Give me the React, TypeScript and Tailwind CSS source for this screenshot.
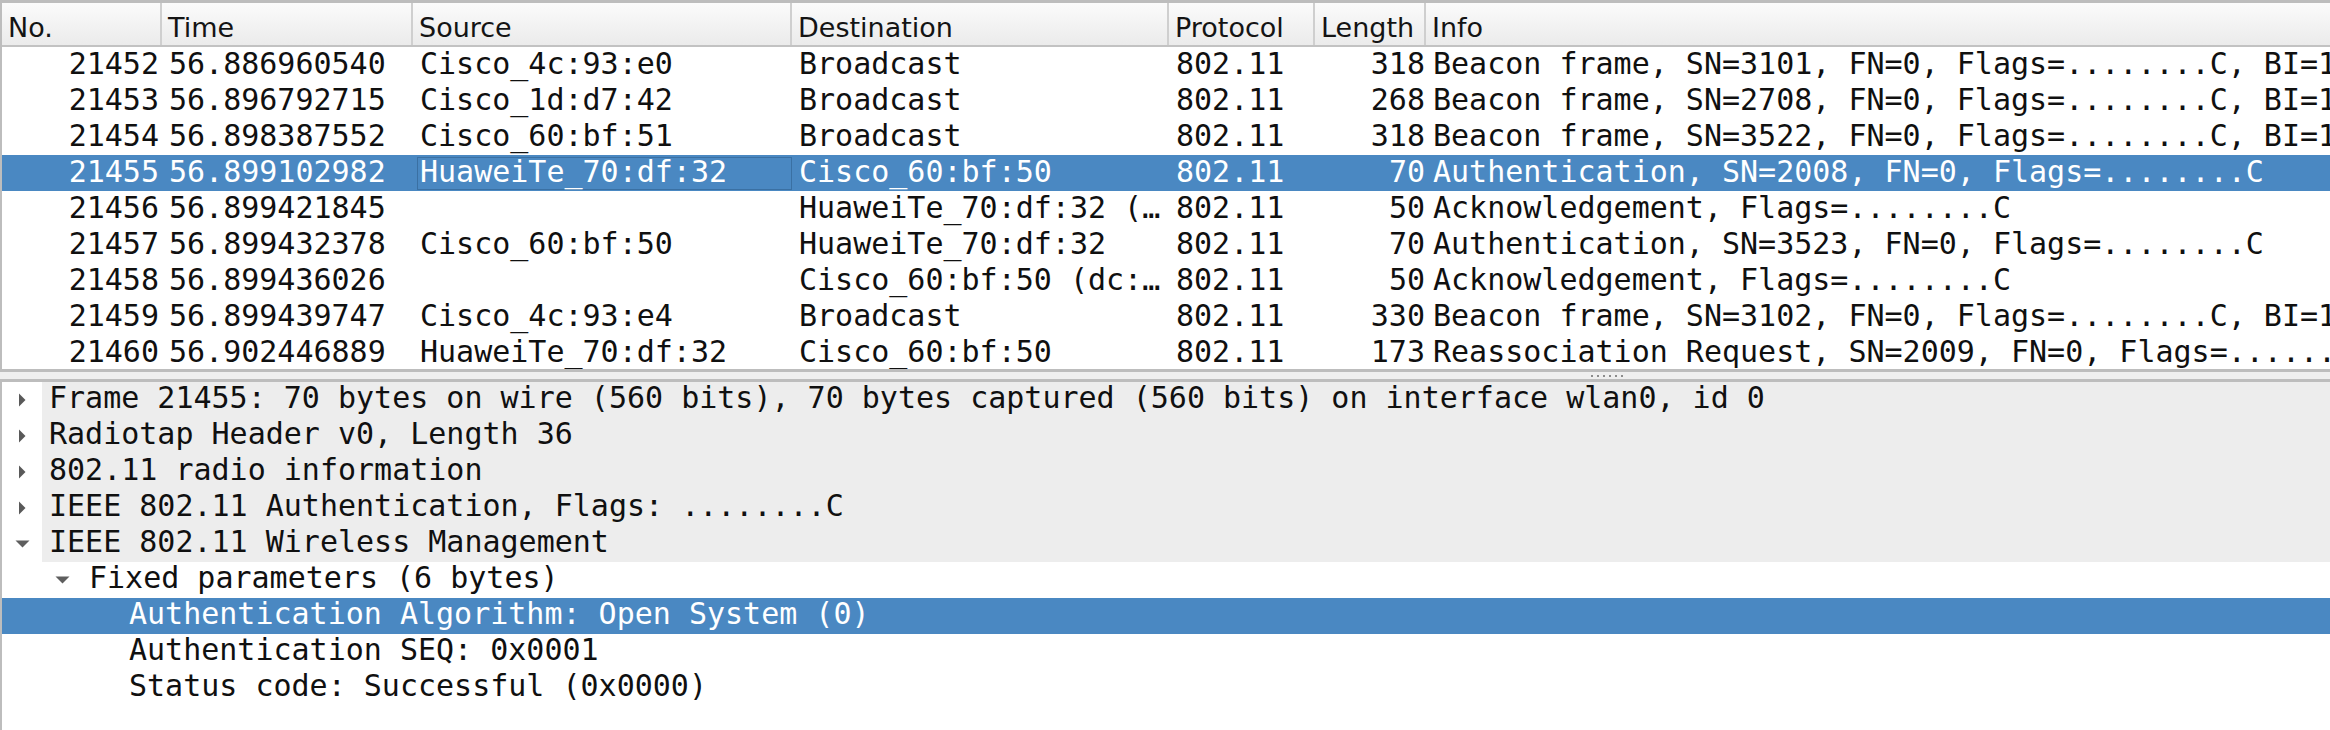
import React from "react";

type Pkt = [string, string, string, string, string, string, string];

const packets: Pkt[] = [
  ["21452", "56.886960540", "Cisco_4c:93:e0", "Broadcast", "802.11", "318", "Beacon frame, SN=3101, FN=0, Flags=........C, BI=102, SSID=eduroam"],
  ["21453", "56.896792715", "Cisco_1d:d7:42", "Broadcast", "802.11", "268", "Beacon frame, SN=2708, FN=0, Flags=........C, BI=102, SSID=eduroam"],
  ["21454", "56.898387552", "Cisco_60:bf:51", "Broadcast", "802.11", "318", "Beacon frame, SN=3522, FN=0, Flags=........C, BI=102, SSID=eduroam"],
  ["21455", "56.899102982", "HuaweiTe_70:df:32", "Cisco_60:bf:50", "802.11", "70", "Authentication, SN=2008, FN=0, Flags=........C"],
  ["21456", "56.899421845", "", "HuaweiTe_70:df:32 (48:db:50:70:df:32) (RA)", "802.11", "50", "Acknowledgement, Flags=........C"],
  ["21457", "56.899432378", "Cisco_60:bf:50", "HuaweiTe_70:df:32", "802.11", "70", "Authentication, SN=3523, FN=0, Flags=........C"],
  ["21458", "56.899436026", "", "Cisco_60:bf:50 (dc:eb:94:60:bf:50) (RA)", "802.11", "50", "Acknowledgement, Flags=........C"],
  ["21459", "56.899439747", "Cisco_4c:93:e4", "Broadcast", "802.11", "330", "Beacon frame, SN=3102, FN=0, Flags=........C, BI=102, SSID=eduroam"],
  ["21460", "56.902446889", "HuaweiTe_70:df:32", "Cisco_60:bf:50", "802.11", "173", "Reassociation Request, SN=2009, FN=0, Flags=........C, SSID=eduroam"],
];

function RightArrow() {
  return (
    <svg width="8" height="14" viewBox="0 0 8 14">
      <path d="M1 0.5 L7.5 7 L1 13.5 Z" fill="#595959" />
    </svg>
  );
}

function DownArrow() {
  return (
    <svg width="15" height="8" viewBox="0 0 15 8">
      <path d="M0.5 0.5 L14.5 0.5 L7.5 7.5 Z" fill="#5e5e5e" />
    </svg>
  );
}

function PacketRow({ p, selected }: { p: Pkt; selected: boolean }) {
  return (
    <div
      className={`flex h-[36px] shrink-0 items-stretch whitespace-nowrap leading-[33px] ${
        selected ? "bg-[#4a88c2] text-white" : "text-[#101010]"
      }`}
    >
      <div className="w-[160px] shrink-0 pr-[3px] text-right">{p[0]}</div>
      <div className="w-[251px] shrink-0 pl-[7px]">{p[1]}</div>
      <div className="relative w-[379px] shrink-0 pl-[7px]">
        {selected && (
          <div className="absolute left-[4px] right-0 top-[2px] bottom-[1px] border border-[#3a70a3]" />
        )}
        <span className="relative">{p[2]}</span>
      </div>
      <div className="w-[377px] shrink-0 overflow-hidden text-ellipsis whitespace-nowrap pl-[7px] pr-[4px]">
        {p[3]}
      </div>
      <div className="w-[146px] shrink-0 pl-[7px]">{p[4]}</div>
      <div className="w-[111px] shrink-0 pr-[1px] text-right">{p[5]}</div>
      <div className="shrink-0 pl-[7px]">{p[6]}</div>
    </div>
  );
}

type Det = {
  level: 0 | 1 | 2;
  text: string;
  arrow: "right" | "down" | "none";
  gray?: boolean;
  selected?: boolean;
};

const details: Det[] = [
  { level: 0, arrow: "right", gray: true, text: "Frame 21455: 70 bytes on wire (560 bits), 70 bytes captured (560 bits) on interface wlan0, id 0" },
  { level: 0, arrow: "right", gray: true, text: "Radiotap Header v0, Length 36" },
  { level: 0, arrow: "right", gray: true, text: "802.11 radio information" },
  { level: 0, arrow: "right", gray: true, text: "IEEE 802.11 Authentication, Flags: ........C" },
  { level: 0, arrow: "down", gray: true, text: "IEEE 802.11 Wireless Management" },
  { level: 1, arrow: "down", text: "Fixed parameters (6 bytes)" },
  { level: 2, arrow: "none", selected: true, text: "Authentication Algorithm: Open System (0)" },
  { level: 2, arrow: "none", text: "Authentication SEQ: 0x0001" },
  { level: 2, arrow: "none", text: "Status code: Successful (0x0000)" },
];

function DetailRow({ d }: { d: Det }) {
  const indent = d.level === 0 ? "w-0" : d.level === 1 ? "w-[40px]" : "w-[80px]";
  return (
    <div
      className={`flex h-[36px] shrink-0 items-stretch whitespace-nowrap leading-[32px] ${
        d.selected ? "bg-[#4a88c2] text-white" : "text-[#101010]"
      }`}
    >
      <div className={`${indent} shrink-0`} />
      <div className="flex w-[40px] shrink-0 items-center justify-center">
        {d.arrow === "right" && <RightArrow />}
        {d.arrow === "down" && <DownArrow />}
      </div>
      <div className={`flex-1 pl-[7px] ${d.gray ? "bg-[#ededed]" : ""}`}>{d.text}</div>
    </div>
  );
}

const headers = [
  { label: "No.", w: "w-[160px]" },
  { label: "Time", w: "w-[251px]" },
  { label: "Source", w: "w-[379px]" },
  { label: "Destination", w: "w-[377px]" },
  { label: "Protocol", w: "w-[146px]" },
  { label: "Length", w: "w-[111px]" },
];

export default function App() {
  return (
    <div className="flex h-[730px] w-[2330px] flex-col overflow-hidden bg-white font-['DejaVu_Sans_Mono',monospace] text-[30px]">
      {/* Packet list */}
      <div className="flex shrink-0 flex-col border-l-2 border-t-[3px] border-b-[3px] border-[#bdbdbd]">
        <div className="flex h-[44px] shrink-0 items-stretch border-b-2 border-[#c2c2c2] bg-linear-to-b from-[#fbfbfb] to-[#ebebeb] font-['DejaVu_Sans',sans-serif] text-[27px] leading-[36px] text-[#141414]">
          {headers.map((h) => (
            <div key={h.label} className={`${h.w} shrink-0 border-r-2 border-[#cfcfcf] pl-[6px] pt-[7px]`}>
              {h.label}
            </div>
          ))}
          <div className="flex-1 pl-[6px] pt-[7px]">Info</div>
        </div>
        <div className="flex h-[322px] flex-col overflow-hidden">
          {packets.map((p) => (
            <PacketRow key={p[0]} p={p} selected={p[0] === "21455"} />
          ))}
        </div>
      </div>

      {/* Splitter */}
      <div className="flex h-[7px] shrink-0 items-center gap-[4px] bg-[#efefef] pl-[1591px]">
        <div className="h-[2px] w-[2px] bg-[#8c8c8c]" />
        <div className="h-[2px] w-[2px] bg-[#8c8c8c]" />
        <div className="h-[2px] w-[2px] bg-[#8c8c8c]" />
        <div className="h-[2px] w-[2px] bg-[#8c8c8c]" />
        <div className="h-[2px] w-[2px] bg-[#8c8c8c]" />
        <div className="h-[2px] w-[2px] bg-[#8c8c8c]" />
      </div>

      {/* Details */}
      <div className="flex flex-1 flex-col border-l-2 border-t-[3px] border-[#bdbdbd]">
        {details.map((d, i) => (
          <DetailRow key={i} d={d} />
        ))}
      </div>
    </div>
  );
}
